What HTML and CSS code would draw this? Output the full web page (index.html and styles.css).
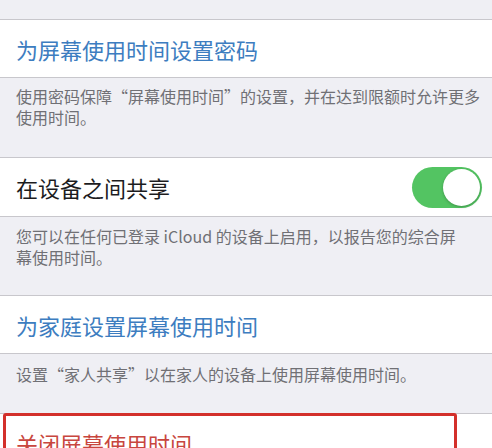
FILE: index.html
```html
<!DOCTYPE html>
<html lang="zh-CN">
<head>
<meta charset="utf-8">
<title>屏幕使用时间</title>
<link rel="stylesheet" href="styles.css">
</head>
<body>
<div class="page">
  <div class="spacer"></div>
  <div class="cell"><span class="link">为屏幕使用时间设置密码</span></div>
  <p class="footer f1">使用密码保障“屏幕使用时间”的设置，并在达到限额时允许更多<br>使用时间。</p>
  <div class="cell row"><span class="label">在设备之间共享</span><span class="toggle"><span class="knob"></span></span></div>
  <p class="footer f2">您可以在任何已登录 iCloud 的设备上启用，以报告您的综合屏<br>幕使用时间。</p>
  <div class="cell"><span class="link">为家庭设置屏幕使用时间</span></div>
  <p class="footer f3">设置“家人共享”以在家人的设备上使用屏幕使用时间。</p>
  <div class="cell danger-cell">
    <span class="danger">关闭屏幕使用时间</span>
    <div class="mark"></div>
  </div>
</div>
</body>
</html>
```
FILE: styles.css
```css
html, body {
  margin: 0;
  padding: 0;
  background: #efeff4;
}
.page {
  width: 492px;
  height: 448px;
  overflow: hidden;
  font-family: "Noto Sans CJK SC", "Noto Sans", sans-serif;
}
.spacer {
  height: 19px;
}
.cell {
  background: #ffffff;
  border-top: 1px solid #c8c7cc;
  border-bottom: 1px solid #c8c7cc;
  height: 57px;
  padding: 0 16px;
  display: flex;
  align-items: center;
  font-size: 22px;
  line-height: 30px;
  box-sizing: content-box;
}
.cell.row {
  height: 58px;
  justify-content: space-between;
  padding-right: 10px;
}
.link {
  color: #3d7dc0;
}
.label {
  color: #1c1c1e;
}
.footer {
  margin: 0;
  padding: 8px 12px 29px 16px;
  font-size: 16px;
  line-height: 21px;
  color: #707075;
  white-space: nowrap;
}
.footer.f2 {
  padding-top: 9px;
  padding-bottom: 27px;
}
.footer.f3 {
  padding-top: 10px;
  padding-bottom: 28px;
}
.toggle {
  width: 70px;
  height: 41px;
  border-radius: 21px;
  background: #53c462;
  display: flex;
  align-items: center;
  justify-content: flex-end;
  padding: 0 2px;
  box-sizing: border-box;
}
.knob {
  width: 37px;
  height: 37px;
  border-radius: 50%;
  background: #ffffff;
  box-shadow: 0 1px 3px rgba(0, 0, 0, 0.25);
}
.danger-cell {
  position: relative;
  align-items: flex-start;
  padding-top: 14px;
  height: 60px;
}
.danger {
  color: #c8463e;
}
.mark {
  position: absolute;
  left: 3px;
  top: -1px;
  width: 454px;
  height: 80px;
  border: 3px solid #d3302b;
  border-radius: 3px;
  box-sizing: border-box;
}
```
